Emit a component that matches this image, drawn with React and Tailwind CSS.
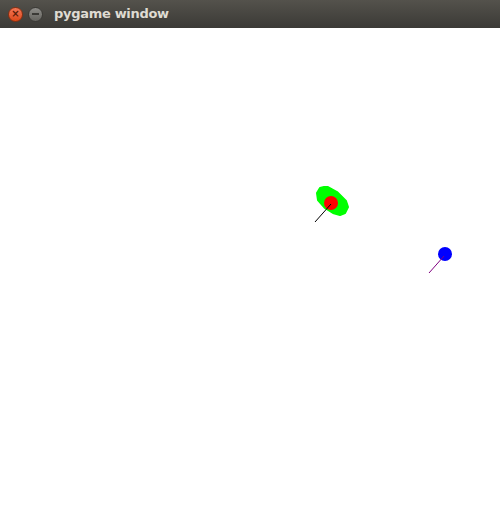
import React from "react";

const Scene = () => (
  <svg className="block" width="500" height="500" viewBox="0 28 500 500">
    {/* green blob */}
    <polygon
      fill="#00ff00"
      stroke="#00ff00"
      strokeWidth="2"
      strokeLinejoin="round"
      points="324,187 328,187 337,192 346,201 348,207 345,213 340,215 333,213 325,208 318,200 317,193 320,188"
    />
    <circle cx="331" cy="203" r="7" fill="#ff0000" />
    <line x1="331" y1="204" x2="315" y2="222" stroke="#000" strokeWidth="1" />
    {/* blue ball */}
    <circle cx="445" cy="254" r="7" fill="#0000ff" />
    <line x1="444" y1="256" x2="429" y2="273" stroke="#800080" strokeWidth="1" />
  </svg>
);

export default function App() {
  return (
    <div className="w-[500px] h-[528px] flex flex-col bg-white overflow-hidden">
      <div className="h-[28px] flex items-center bg-gradient-to-b from-[#54524c] to-[#3b3a36] pl-[8px]">
        <div className="w-[15px] h-[15px] rounded-full bg-gradient-to-b from-[#f37655] to-[#dd4814] border border-[#8a2f10] flex items-center justify-center text-[#5a1c08] text-[10px] font-bold leading-none font-['DejaVu_Sans',sans-serif]">
          ×
        </div>
        <div className="ml-[5px] w-[15px] h-[15px] rounded-full bg-gradient-to-b from-[#8e8d89] to-[#65645f] border border-[#3a3935] flex items-center justify-center">
          <div className="w-[7px] h-[2px] bg-[#3b3a36]" />
        </div>
        <span className="ml-[11px] text-[13px] font-bold text-[#dfdbd2] font-['DejaVu_Sans',sans-serif] tracking-[-0.3px]">
          pygame window
        </span>
      </div>
      <Scene />
    </div>
  );
}
